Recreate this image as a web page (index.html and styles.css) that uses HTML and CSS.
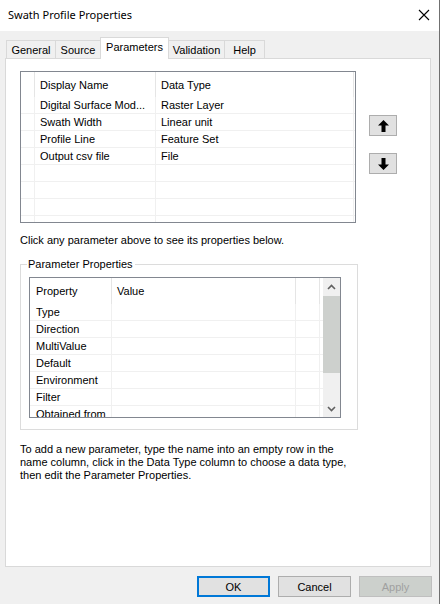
FILE: index.html
```html
<!DOCTYPE html>
<html>
<head>
<meta charset="utf-8">
<link rel="stylesheet" href="styles.css">
</head>
<body>
<div class="window">
  <div class="titlebar">
    <span class="title">Swath Profile Properties</span>
    <svg class="close" width="12" height="12" viewBox="0 0 12 12"><path d="M1 1L11 11M11 1L1 11" stroke="#000" stroke-width="1.1" fill="none"/></svg>
  </div>
  <div class="body">
    <div class="tabs">
      <div class="tab t-general">General</div>
      <div class="tab t-source">Source</div>
      <div class="tab active t-params">Parameters</div>
      <div class="tab t-valid">Validation</div>
      <div class="tab t-help">Help</div>
    </div>
    <div class="panel">
      <div class="top-row">
        <div class="grid params">
          <div class="row head"><span class="rh"></span><span class="c1">Display Name</span><span class="c2">Data Type</span></div>
          <div class="row"><span class="rh"></span><span class="c1">Digital Surface Mod...</span><span class="c2">Raster Layer</span></div>
          <div class="row"><span class="rh"></span><span class="c1">Swath Width</span><span class="c2">Linear unit</span></div>
          <div class="row"><span class="rh"></span><span class="c1">Profile Line</span><span class="c2">Feature Set</span></div>
          <div class="row"><span class="rh"></span><span class="c1">Output csv file</span><span class="c2">File</span></div>
          <div class="row"><span class="rh"></span><span class="c1"></span><span class="c2"></span></div>
          <div class="row"><span class="rh"></span><span class="c1"></span><span class="c2"></span></div>
          <div class="row"><span class="rh"></span><span class="c1"></span><span class="c2"></span></div>
          <div class="row"><span class="rh"></span><span class="c1"></span><span class="c2"></span></div>
        </div>
        <div class="movers">
          <button class="mover up"><svg width="11" height="12" viewBox="0 0 11 12"><path d="M5.5 0L11 5.5H7.5V12H3.5V5.5H0Z" fill="#000"/></svg></button>
          <button class="mover down"><svg width="11" height="12" viewBox="0 0 11 12"><path d="M5.5 12L11 6.5H7.5V0H3.5V6.5H0Z" fill="#000"/></svg></button>
        </div>
      </div>
      <p class="hint">Click any parameter above to see its properties below.</p>
      <div class="group">
        <span class="legend">Parameter Properties</span>
        <div class="grid props">
          <div class="rows">
            <div class="prow head"><span class="p1">Property</span><span class="p2">Value</span><span class="p3"></span></div>
            <div class="prow"><span class="p1">Type</span><span class="p2"></span><span class="p3"></span></div>
            <div class="prow"><span class="p1">Direction</span><span class="p2"></span><span class="p3"></span></div>
            <div class="prow"><span class="p1">MultiValue</span><span class="p2"></span><span class="p3"></span></div>
            <div class="prow"><span class="p1">Default</span><span class="p2"></span><span class="p3"></span></div>
            <div class="prow"><span class="p1">Environment</span><span class="p2"></span><span class="p3"></span></div>
            <div class="prow"><span class="p1">Filter</span><span class="p2"></span><span class="p3"></span></div>
            <div class="prow"><span class="p1">Obtained from</span><span class="p2"></span><span class="p3"></span></div>
          </div>
          <div class="scrollbar">
            <div class="sb-btn"><svg width="9" height="6" viewBox="0 0 9 6"><path d="M1 5L4.5 1.5L8 5" stroke="#606060" stroke-width="1.6" fill="none"/></svg></div>
            <div class="sb-track"><div class="sb-thumb"></div></div>
            <div class="sb-btn"><svg width="9" height="6" viewBox="0 0 9 6"><path d="M1 1L4.5 4.5L8 1" stroke="#606060" stroke-width="1.6" fill="none"/></svg></div>
          </div>
        </div>
      </div>
      <p class="help">To add a new parameter, type the name into an empty row in the<br>name column, click in the Data Type column to choose a data type,<br>then edit the Parameter Properties.</p>
    </div>
    <div class="footer">
      <button class="btn default">OK</button>
      <button class="btn">Cancel</button>
      <button class="btn disabled">Apply</button>
    </div>
  </div>
</div>
</body>
</html>
```
FILE: styles.css
```css
html, body {
  margin: 0;
  padding: 0;
  background: #f0f0f0;
}
body {
  font-family: "Liberation Sans", Arial, sans-serif;
  font-size: 11px;
  color: #000;
}
.window {
  width: 439px;
  height: 604px;
  border-right: 1px solid #707070;
  background: #f0f0f0;
  display: flex;
  flex-direction: column;
}
.titlebar {
  height: 31px;
  background: #fff;
  display: flex;
  align-items: center;
  justify-content: space-between;
  padding: 0 9px 2px 8px;
  box-sizing: border-box;
}
.title {
  font-size: 11px;
  font-family: "Noto Sans", "Liberation Sans", sans-serif;
}
.close {
  display: block;
}
.body {
  padding: 6px 0 0 5px;
  display: flex;
  flex-direction: column;
}
.tabs {
  display: flex;
  align-items: flex-end;
  height: 21px;
  margin-left: 1px;
  position: relative;
  z-index: 1;
}
.tab {
  height: 18px;
  box-sizing: border-box;
  border: 1px solid #d9d9d9;
  border-bottom: none;
  background: #f0f0f0;
  display: flex;
  align-items: center;
  justify-content: center;
  margin-left: -1px;
  padding-top: 1px;
}
.tab:first-child { margin-left: 0; }
.t-general { width: 50px; }
.t-source { width: 46px; }
.t-params { width: 69px; }
.t-valid { width: 57px; }
.t-help { width: 41px; }
.tab.active {
  height: 22px;
  margin-bottom: -1px;
  background: #fff;
  padding-top: 0;
  padding-bottom: 3px;
}
.panel {
  width: 426px;
  height: 509px;
  box-sizing: border-box;
  border: 1px solid #d9d9d9;
  background: #fff;
  padding: 12px 0 0 14px;
}
.top-row {
  display: flex;
  align-items: flex-start;
}
.grid {
  border: 1px solid #828790;
  background: #fff;
  overflow: hidden;
  box-sizing: border-box;
}
.params {
  width: 336px;
  height: 152px;
}
.row {
  display: flex;
  height: 17px;
  box-sizing: border-box;
  border-bottom: 1px solid #f0f0f0;
  line-height: 16px;
}
.row.head {
  height: 25px;
  border-bottom: none;
  align-items: stretch;
  line-height: 26px;
}
.row span {
  box-sizing: border-box;
  border-right: 1px solid #f0f0f0;
  white-space: nowrap;
  overflow: hidden;
}
.row.head span {
  border-right-color: #e5e5e5;
  height: 25px;
}
.rh { width: 14px; }
.c1 { width: 121px; padding-left: 5px; }
.c2 { width: 198px; padding-left: 5px; }
.movers {
  display: flex;
  flex-direction: column;
  margin-left: 13px;
  margin-top: 44px;
  gap: 17px;
}
.mover {
  width: 28px;
  height: 21px;
  box-sizing: border-box;
  border: 1px solid #adadad;
  background: #e1e1e1;
  padding: 0;
  margin: 0;
  display: flex;
  align-items: center;
  justify-content: center;
}
.mover svg { display: block; }
.hint {
  margin: 11px 0 0 0;
  line-height: 13px;
}
.group {
  position: relative;
  margin-top: 17px;
  width: 338px;
  height: 166px;
  box-sizing: border-box;
  border: 1px solid #dcdcdc;
  padding: 12px 0 0 8px;
}
.legend {
  position: absolute;
  top: -7px;
  left: 6px;
  padding: 0 2px 0 1px;
  background: #fff;
  line-height: 13px;
}
.props {
  width: 312px;
  height: 141px;
  display: flex;
}
.rows {
  flex: 1;
  overflow: hidden;
}
.prow {
  display: flex;
  height: 17px;
  box-sizing: border-box;
  border-bottom: 1px solid #f0f0f0;
  line-height: 16px;
}
.prow.head {
  height: 26px;
  border-bottom: none;
  line-height: 26px;
}
.prow span {
  box-sizing: border-box;
  border-right: 1px solid #f0f0f0;
  white-space: nowrap;
  overflow: hidden;
}
.prow.head span { border-right-color: #e5e5e5; height: 26px; }
.p1 { width: 82px; padding-left: 6px; }
.p2 { width: 184px; padding-left: 5px; }
.p3 { width: 24px; }
.scrollbar {
  width: 17px;
  background: #f0f0f0;
  display: flex;
  flex-direction: column;
}
.sb-btn {
  height: 17px;
  display: flex;
  align-items: center;
  justify-content: center;
}
.sb-btn svg { display: block; }
.sb-track {
  flex: 1;
  padding-top: 1px;
}
.sb-thumb {
  height: 77px;
  background: #cdd0cd;
}
.help {
  margin: 13px 0 0 0;
  line-height: 13px;
}
.footer {
  display: flex;
  justify-content: flex-end;
  gap: 8px;
  padding: 9px 7px 0 0;
}
.btn {
  width: 73px;
  height: 21px;
  box-sizing: border-box;
  border: 1px solid #adadad;
  background: #e1e1e1;
  font-family: "Liberation Sans", Arial, sans-serif;
  font-size: 11px;
  color: #000;
  padding: 0;
  margin: 0;
}
.btn.default {
  border: 2px solid #0078d7;
}
.btn.disabled {
  background: #ccd0cc;
  border-color: #bfbfbf;
  color: #a0a0a0;
}
```
